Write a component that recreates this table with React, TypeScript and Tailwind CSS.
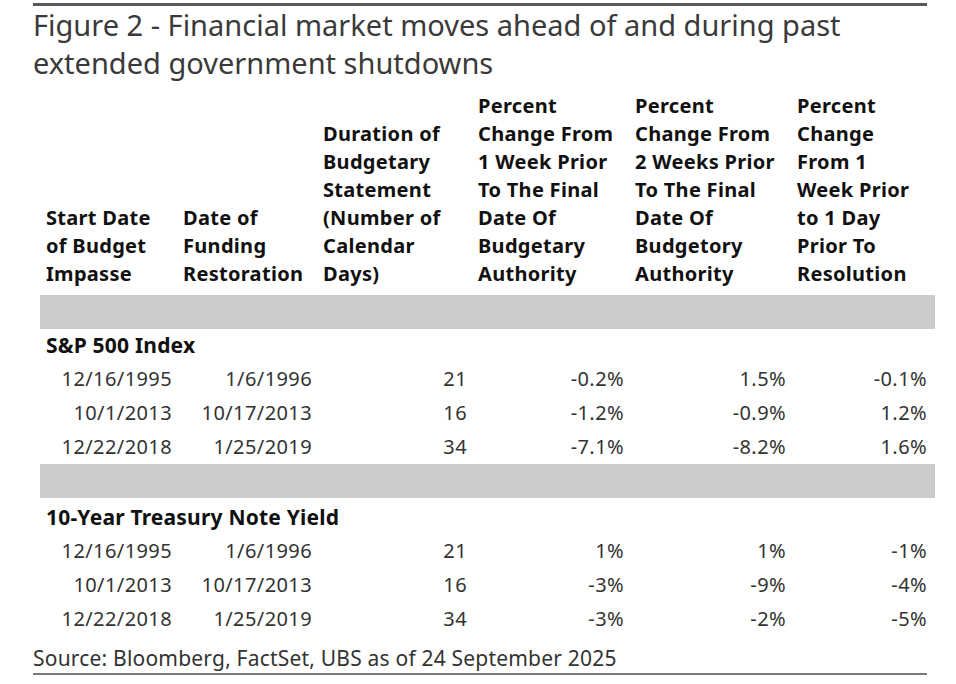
import React from "react";

type Row = string[];

const HEADERS: string[][] = [
  ["Start Date", "of Budget", "Impasse"],
  ["Date of", "Funding", "Restoration"],
  ["Duration of", "Budgetary", "Statement", "(Number of", "Calendar", "Days)"],
  ["Percent", "Change From", "1 Week Prior", "To The Final", "Date Of", "Budgetary", "Authority"],
  ["Percent", "Change From", "2 Weeks Prior", "To The Final", "Date Of", "Budgetory", "Authority"],
  ["Percent", "Change", "From 1", "Week Prior", "to 1 Day", "Prior To", "Resolution"],
];

const SECTIONS: { title: string; rows: Row[] }[] = [
  {
    title: "S&P 500 Index",
    rows: [
      ["12/16/1995", "1/6/1996", "21", "-0.2%", "1.5%", "-0.1%"],
      ["10/1/2013", "10/17/2013", "16", "-1.2%", "-0.9%", "1.2%"],
      ["12/22/2018", "1/25/2019", "34", "-7.1%", "-8.2%", "1.6%"],
    ],
  },
  {
    title: "10-Year Treasury Note Yield",
    rows: [
      ["12/16/1995", "1/6/1996", "21", "1%", "1%", "-1%"],
      ["10/1/2013", "10/17/2013", "16", "-3%", "-9%", "-4%"],
      ["12/22/2018", "1/25/2019", "34", "-3%", "-2%", "-5%"],
    ],
  },
];

const GRID = "grid grid-cols-[137px_140px_155px_157px_162px_144px]";

export default function App() {
  return (
    <div className="w-[956px] h-[684px] bg-white text-[#333] font-['Noto_Sans',sans-serif] overflow-hidden">
      <div className="ml-[33px] w-[894px] h-[3px] mt-[3px] bg-[#5a5a5a]" />
      <h1 className="ml-[33px] text-[29px] leading-[38px] text-[#3a3a3a] font-normal">
        Figure 2 - Financial market moves ahead of and during past
        <br />
        extended government shutdowns
      </h1>

      <div className="ml-[40px] w-[895px] mt-[10px]">
        {/* column headers */}
        <div className={`${GRID} items-end text-[20px] leading-[28px] tracking-[0.3px] font-bold text-[#111]`}>
          {HEADERS.map((lines, i) => (
            <div key={i} className="pl-[6px]">
              {lines.map((l) => (
                <div key={l} className="whitespace-nowrap">{l}</div>
              ))}
            </div>
          ))}
        </div>

        {SECTIONS.map((s, si) => (
          <div key={s.title}>
            <div className={`h-[34px] bg-[#cccccc] ${si === 0 ? "mt-[7px]" : ""}`} />
            <div
              className={`pl-[6px] flex items-center text-[21px] tracking-[0.2px] font-bold text-[#111] ${
                si === 0 ? "h-[33px]" : "h-[36px] pt-[4px]"
              }`}
            >
              {s.title}
            </div>
            {s.rows.map((r, ri) => (
              <div
                key={ri}
                className={`${GRID} h-[34px] items-center text-[20px] tracking-[0.4px] text-[#333]`}
              >
                {r.map((c, ci) => (
                  <div key={ci} className={`text-right ${ci === 5 ? "pr-[8px]" : "pr-[5px]"}`}>
                    {c}
                  </div>
                ))}
              </div>
            ))}
          </div>
        ))}
      </div>

      <div className="ml-[33px] mt-[8px] text-[21px] leading-[28px] tracking-[0.2px] text-[#333]">
        Source: Bloomberg, FactSet, UBS as of 24 September 2025
      </div>
      <div className="ml-[33px] w-[894px] h-[2px] mt-[1px] bg-[#777]" />
    </div>
  );
}
